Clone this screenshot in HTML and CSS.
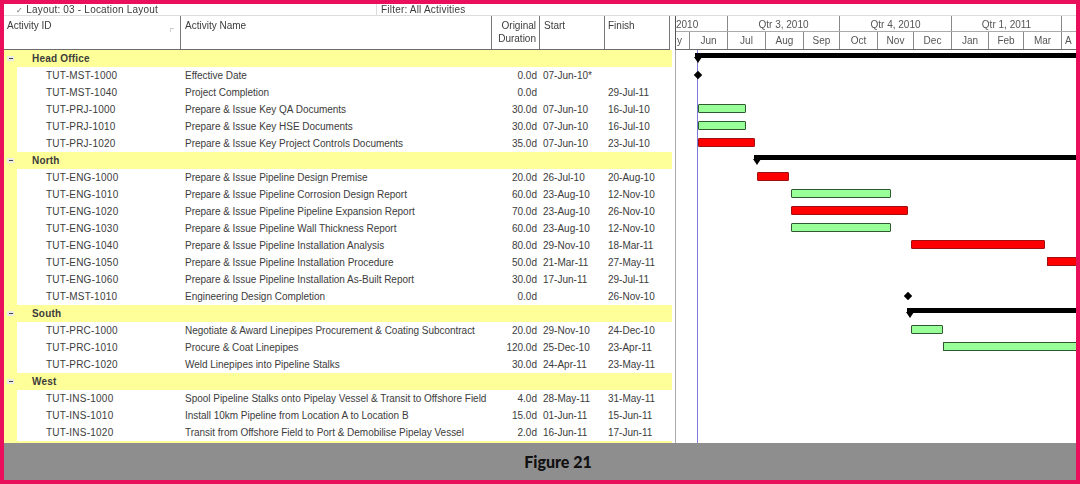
FILE: index.html
```html
<!DOCTYPE html>
<html lang="en">
<head>
<meta charset="utf-8">
<title>Figure 21</title>
<link rel="stylesheet" href="styles.css">
</head>
<body>
<div class="frame">
  <div class="toolbar">
    <div class="tb-layout"><span class="tick">✓</span> Layout: 03 - Location Layout</div>
    <div class="tb-filter">Filter: All Activities</div>
  </div>
  <div class="schedule">
    <div class="table">
      <div class="thead">
        <div class="th c-id">Activity ID<span class="sort"></span></div>
        <div class="th c-name">Activity Name</div>
        <div class="th c-dur">Original<br>Duration</div>
        <div class="th c-start">Start</div>
        <div class="th c-finish">Finish</div>
      </div>
      <div class="tbody">
        <div class="group"><span class="toggle"></span><span class="gname">Head Office</span></div>
        <div class="row"><span class="c-id">TUT-MST-1000</span><span class="c-name">Effective Date</span><span class="c-dur">0.0d</span><span class="c-start">07-Jun-10*</span><span class="c-finish"></span></div>
        <div class="row"><span class="c-id">TUT-MST-1040</span><span class="c-name">Project Completion</span><span class="c-dur">0.0d</span><span class="c-start"></span><span class="c-finish">29-Jul-11</span></div>
        <div class="row"><span class="c-id">TUT-PRJ-1000</span><span class="c-name">Prepare &amp; Issue Key QA Documents</span><span class="c-dur">30.0d</span><span class="c-start">07-Jun-10</span><span class="c-finish">16-Jul-10</span></div>
        <div class="row"><span class="c-id">TUT-PRJ-1010</span><span class="c-name">Prepare &amp; Issue Key HSE Documents</span><span class="c-dur">30.0d</span><span class="c-start">07-Jun-10</span><span class="c-finish">16-Jul-10</span></div>
        <div class="row"><span class="c-id">TUT-PRJ-1020</span><span class="c-name">Prepare &amp; Issue Key Project Controls Documents</span><span class="c-dur">35.0d</span><span class="c-start">07-Jun-10</span><span class="c-finish">23-Jul-10</span></div>
        <div class="group"><span class="toggle"></span><span class="gname">North</span></div>
        <div class="row"><span class="c-id">TUT-ENG-1000</span><span class="c-name">Prepare &amp; Issue Pipeline Design Premise</span><span class="c-dur">20.0d</span><span class="c-start">26-Jul-10</span><span class="c-finish">20-Aug-10</span></div>
        <div class="row"><span class="c-id">TUT-ENG-1010</span><span class="c-name">Prepare &amp; Issue Pipeline Corrosion Design Report</span><span class="c-dur">60.0d</span><span class="c-start">23-Aug-10</span><span class="c-finish">12-Nov-10</span></div>
        <div class="row"><span class="c-id">TUT-ENG-1020</span><span class="c-name">Prepare &amp; Issue Pipeline Pipeline Expansion Report</span><span class="c-dur">70.0d</span><span class="c-start">23-Aug-10</span><span class="c-finish">26-Nov-10</span></div>
        <div class="row"><span class="c-id">TUT-ENG-1030</span><span class="c-name">Prepare &amp; Issue Pipeline Wall Thickness Report</span><span class="c-dur">60.0d</span><span class="c-start">23-Aug-10</span><span class="c-finish">12-Nov-10</span></div>
        <div class="row"><span class="c-id">TUT-ENG-1040</span><span class="c-name">Prepare &amp; Issue Pipeline Installation Analysis</span><span class="c-dur">80.0d</span><span class="c-start">29-Nov-10</span><span class="c-finish">18-Mar-11</span></div>
        <div class="row"><span class="c-id">TUT-ENG-1050</span><span class="c-name">Prepare &amp; Issue Pipeline Installation Procedure</span><span class="c-dur">50.0d</span><span class="c-start">21-Mar-11</span><span class="c-finish">27-May-11</span></div>
        <div class="row"><span class="c-id">TUT-ENG-1060</span><span class="c-name">Prepare &amp; Issue Pipeline Installation As-Built Report</span><span class="c-dur">30.0d</span><span class="c-start">17-Jun-11</span><span class="c-finish">29-Jul-11</span></div>
        <div class="row"><span class="c-id">TUT-MST-1010</span><span class="c-name">Engineering Design Completion</span><span class="c-dur">0.0d</span><span class="c-start"></span><span class="c-finish">26-Nov-10</span></div>
        <div class="group"><span class="toggle"></span><span class="gname">South</span></div>
        <div class="row"><span class="c-id">TUT-PRC-1000</span><span class="c-name">Negotiate &amp; Award Linepipes Procurement &amp; Coating Subcontract</span><span class="c-dur">20.0d</span><span class="c-start">29-Nov-10</span><span class="c-finish">24-Dec-10</span></div>
        <div class="row"><span class="c-id">TUT-PRC-1010</span><span class="c-name">Procure &amp; Coat Linepipes</span><span class="c-dur">120.0d</span><span class="c-start">25-Dec-10</span><span class="c-finish">23-Apr-11</span></div>
        <div class="row"><span class="c-id">TUT-PRC-1020</span><span class="c-name">Weld Linepipes into Pipeline Stalks</span><span class="c-dur">30.0d</span><span class="c-start">24-Apr-11</span><span class="c-finish">23-May-11</span></div>
        <div class="group"><span class="toggle"></span><span class="gname">West</span></div>
        <div class="row"><span class="c-id">TUT-INS-1000</span><span class="c-name">Spool Pipeline Stalks onto Pipelay Vessel &amp; Transit to Offshore Field</span><span class="c-dur">4.0d</span><span class="c-start">28-May-11</span><span class="c-finish">31-May-11</span></div>
        <div class="row"><span class="c-id">TUT-INS-1010</span><span class="c-name">Install 10km Pipeline from Location A to Location B</span><span class="c-dur">15.0d</span><span class="c-start">01-Jun-11</span><span class="c-finish">15-Jun-11</span></div>
        <div class="row"><span class="c-id">TUT-INS-1020</span><span class="c-name">Transit from Offshore Field to Port &amp; Demobilise Pipelay Vessel</span><span class="c-dur">2.0d</span><span class="c-start">16-Jun-11</span><span class="c-finish">17-Jun-11</span></div>
      </div>
    </div>
    <div class="gantt">
      <div class="timescale">
        <div class="ts-row ts-quarters">
          <span class="q q-first">2010</span><span class="q q-3">Qtr 3, 2010</span><span class="q q-4">Qtr 4, 2010</span><span class="q q-1">Qtr 1, 2011</span><span class="q q-2"></span>
        </div>
        <div class="ts-row ts-months">
          <span class="m m-may">y</span><span class="m m-jun">Jun</span><span class="m m-jul">Jul</span><span class="m m-aug">Aug</span><span class="m m-sep">Sep</span><span class="m m-oct">Oct</span><span class="m m-nov">Nov</span><span class="m m-dec">Dec</span><span class="m m-jan">Jan</span><span class="m m-feb">Feb</span><span class="m m-mar">Mar</span><span class="m m-apr">A</span>
        </div>
      </div>
      <div class="chart">
        <div class="today"></div>
        <div class="grow"><i class="summary" style="left:19px"></i></div>
        <div class="grow"><i class="ms" style="left:19px"></i></div>
        <div class="grow"></div>
        <div class="grow"><i class="bar green" style="left:22px;width:48px"></i></div>
        <div class="grow"><i class="bar green" style="left:22px;width:48px"></i></div>
        <div class="grow"><i class="bar red" style="left:22px;width:57px"></i></div>
        <div class="grow"><i class="summary" style="left:78px"></i></div>
        <div class="grow"><i class="bar red" style="left:81px;width:32px"></i></div>
        <div class="grow"><i class="bar green" style="left:115px;width:100px"></i></div>
        <div class="grow"><i class="bar red" style="left:115px;width:117px"></i></div>
        <div class="grow"><i class="bar green" style="left:115px;width:100px"></i></div>
        <div class="grow"><i class="bar red" style="left:235px;width:134px"></i></div>
        <div class="grow"><i class="bar red open" style="left:371px;width:40px"></i></div>
        <div class="grow"></div>
        <div class="grow"><i class="ms" style="left:229px"></i></div>
        <div class="grow"><i class="summary" style="left:231px"></i></div>
        <div class="grow"><i class="bar green" style="left:235px;width:32px"></i></div>
        <div class="grow"><i class="bar green open" style="left:267px;width:144px"></i></div>
        <div class="grow"></div>
        <div class="grow"></div>
        <div class="grow"></div>
        <div class="grow"></div>
        <div class="grow"></div>
      </div>
    </div>
  </div>
  <div class="caption">Figure 21</div>
</div>
</body>
</html>
```
FILE: styles.css
```css
* { box-sizing: border-box; }
html, body { margin: 0; height: 100%; }
body { width: 1080px; height: 484px; overflow: hidden; font-family: "Liberation Sans", Arial, sans-serif; }
.frame { width: 1080px; height: 484px; border: 4px solid #ea0f5a; display: flex; flex-direction: column; background: #fff; overflow: hidden; color: #3c3c3c; }

.toolbar { height: 12px; flex: none; display: flex; font-size: 10px; line-height: 11px; letter-spacing: .2px; border-bottom: 1px solid #ddd; filter: blur(.3px); }
.tb-layout { width: 373px; padding-left: 12px; border-right: 1px solid #ddd; }
.tick { font-size: 8px; color: #666; }
.tb-filter { padding-left: 4px; }

.schedule { height: 427px; flex: none; display: flex; filter: blur(.3px); }
.table { width: 668px; flex: none; display: flex; flex-direction: column; }
.thead { height: 34px; flex: none; display: flex; margin-right: 2px; border-bottom: 1px solid #6c6c6c; font-size: 10px; line-height: 13px; }
.th { padding-top: 3px; border-right: 1px solid #777; position: relative; }
.thead .c-id { padding-left: 3px; }
.thead .c-name { padding-left: 4px; }
.thead .c-dur { text-align: right; padding-right: 3px; }
.thead .c-start { padding-left: 4px; }
.thead .c-finish { padding-left: 3px; }
.sort { position: absolute; right: 6px; top: 12px; width: 4px; height: 4px; border-top: 1px solid #ccc; border-left: 1px solid #ccc; }

.c-id { width: 177px; flex: none; }
.c-name { width: 311px; flex: none; }
.c-dur { width: 48px; flex: none; }
.c-start { width: 65px; flex: none; }
.c-finish { width: 65px; flex: none; }

.tbody { height: 393px; flex: none; display: grid; grid-template-rows: repeat(23, 17px); background: #ffff99; }
.group { display: flex; align-items: center; background: #ffff99; font-size: 10px; font-weight: bold; letter-spacing: .2px; }
.toggle { width: 7px; height: 5px; margin-left: 3px; background: #ecece4; flex: none; display: flex; align-items: center; justify-content: center; }
.toggle::before { content: ""; width: 4px; height: 1px; background: #444; }
.gname { margin-left: 18px; }
.row { display: flex; align-items: center; margin-left: 13px; background: #fff; font-size: 10px; white-space: nowrap; }
.row .c-id { width: 164px; padding-left: 29px; letter-spacing: .25px; }
.row .c-name { padding-left: 4px; letter-spacing: -.02px; }
.row .c-dur { text-align: right; padding-right: 3px; }
.row .c-start { padding-left: 3px; }
.row .c-finish { padding-left: 3px; }

.gantt { flex: 1; min-width: 0; margin-left: 3px; border-left: 1px solid #aaa; display: flex; flex-direction: column; }
.timescale { height: 34px; flex: none; margin-left: -1px; font-size: 10px; color: #555; border-left: 1px solid #555; border-bottom: 1px solid #6c6c6c; display: flex; flex-direction: column; }
.ts-row { display: flex; white-space: nowrap; }
.ts-quarters { height: 16px; line-height: 17px; border-bottom: 1px solid #aaa; }
.ts-months { height: 17px; line-height: 18px; }
.q, .m { flex: none; text-align: center; border-right: 1px solid #888; overflow: hidden; }
.q-first { width: 52px; text-align: left; }
.q-3, .q-4 { width: 112px; }
.q-1 { width: 110px; }
.q-2 { width: 15px; border-right: 0; }
.m-may { width: 14px; text-align: left; padding-left: 1px; }
.m-jun, .m-jul, .m-aug { width: 38px; }
.m-sep { width: 36px; }
.m-oct { width: 38px; }
.m-nov { width: 36px; }
.m-dec { width: 38px; }
.m-jan { width: 37px; }
.m-feb { width: 35px; }
.m-mar { width: 38px; }
.m-apr { width: 15px; border-right: 0; text-align: left; padding-left: 3px; }

.chart { height: 393px; flex: none; display: grid; grid-template-rows: repeat(23, 17px); position: relative; overflow: hidden; }
.grow { position: relative; }
.today { position: absolute; left: 21px; top: 0; bottom: 0; width: 1px; background: #7c7cd8; }
.bar { position: absolute; top: 3px; height: 9px; border: 1px solid #2f5a2f; border-radius: 1px; }
.bar.open { border-right: 0; }
.green { background: #99ff99; }
.red { background: #f00; border-color: #a01010; }
.summary { position: absolute; top: 3px; right: 0; height: 5px; background: #000; }
.summary::before { content: ""; position: absolute; left: -1px; top: 4px; border-left: 4px solid transparent; border-right: 4px solid transparent; border-top: 6px solid #000; }
.ms { position: absolute; top: 5px; width: 6px; height: 6px; background: #000; transform: rotate(45deg); }

.caption { flex: 1; background: #8e8e8e; color: #111; text-align: center; font: 900 16px/38px "Lato", sans-serif; padding-left: 36px; }
```
